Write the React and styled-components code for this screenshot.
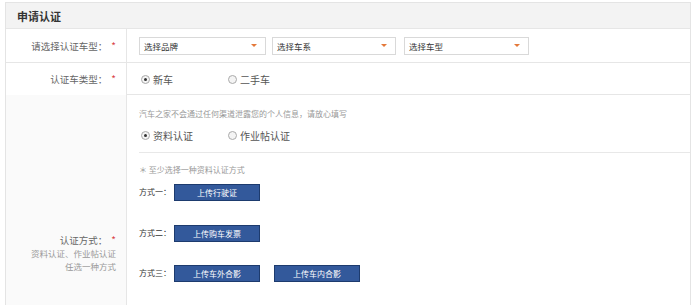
import React from "react"
import styled, { createGlobalStyle } from "styled-components"

const Global = createGlobalStyle`
  body {
    margin: 0;
    background: #fff;
    font-family: "Noto Sans CJK SC", "Liberation Sans", sans-serif;
  }
`

const Page = styled.div`
  padding: 2px 9px 0 5px;
  width: 700px;
  height: 305px;
  box-sizing: border-box;
  overflow: hidden;
`

const Box = styled.div`
  border: 1px solid #e4e4e4;
  border-bottom: none;
  width: 686px;
  box-sizing: border-box;
`

const Title = styled.div`
  height: 26px;
  background: #f3f3f3;
  border-bottom: 1px solid #e6e6e6;
  padding-left: 11px;
  display: flex;
  align-items: center;
  font-size: 11px;
  font-weight: bold;
  color: #333;
  box-sizing: border-box;
`

const Row = styled.div`
  display: grid;
  grid-template-columns: 121px 1fr;
  height: ${(p) => p.h}px;
  border-bottom: ${(p) => (p.last ? "none" : "1px solid #e6e6e6")};
  box-sizing: border-box;
`

const Label = styled.div`
  border-right: 1px solid #e6e6e6;
  background: ${(p) => (p.shade ? "#fafafa" : "#fff")};
  display: flex;
  flex-direction: column;
  align-items: flex-end;
  justify-content: center;
  padding-right: 10px;
  padding-top: ${(p) => p.pt || 0}px;
  font-size: 9.5px;
  color: #666;
  line-height: 13px;
  white-space: nowrap;
`

const Star = styled.span`
  color: #d9434a;
  margin-left: 4px;
  font-size: 10px;
`

const Hint = styled.span`
  font-size: 8.5px;
  color: #999;
  line-height: 13px;
`

const Content = styled.div`
  display: flex;
  flex-direction: ${(p) => (p.col ? "column" : "row")};
  align-items: ${(p) => (p.col ? "stretch" : "center")};
  padding-left: 12px;
`

const Select = styled.div`
  width: ${(p) => p.w}px;
  height: 18px;
  margin-right: ${(p) => p.mr}px;
  border: 1px solid #d9d9d9;
  box-sizing: border-box;
  display: flex;
  align-items: center;
  justify-content: space-between;
  padding: 0 8px 0 4px;
  font-size: 8.5px;
  color: #333;
  background: #fff;
`

const Caret = styled.span`
  width: 0;
  height: 0;
  border-left: 3px solid transparent;
  border-right: 3px solid transparent;
  border-top: 3px solid #e4793a;
`

const RadioRow = styled.div`
  display: flex;
  align-items: center;
  height: ${(p) => p.h}px;
  margin-left: 2px;
`

const Radio = styled.label`
  display: flex;
  align-items: center;
  width: ${(p) => p.w}px;
  font-size: 10px;
  color: #555;
`

const Dot = styled.span`
  width: 7px;
  height: 7px;
  border-radius: 50%;
  border: 1px solid #aaa;
  margin-right: 3px;
  display: flex;
  align-items: center;
  justify-content: center;
  background: #f4f4f4;
  &::after {
    content: "";
    width: 3px;
    height: 3px;
    border-radius: 50%;
    background: ${(p) => (p.on ? "#333" : "transparent")};
  }
`

const Note = styled.div`
  font-size: 8px;
  color: #999;
  height: ${(p) => p.h}px;
  display: flex;
  align-items: flex-end;
  white-space: nowrap;
`

const Divider = styled.div`
  border-top: 1px solid #e8e8e8;
  margin-top: 1px;
  height: 0;
`

const Way = styled.div`
  display: flex;
  align-items: center;
  margin-top: ${(p) => p.mt}px;
  font-size: 8px;
  color: #333;
  white-space: nowrap;
`

const WayLabel = styled.span`
  width: 35px;
  margin-top: -3px;
`

const Btn = styled.button`
  width: 86px;
  height: 17px;
  margin-right: 14px;
  background: #33599b;
  border: 1px solid #1d3b6e;
  color: #fff;
  font-family: inherit;
  font-size: 8px;
  padding: 0;
  cursor: pointer;
`

export default function App() {
  return (
    <Page>
      <Global />
      <Box>
        <Title>申请认证</Title>
        <Row h={34}>
          <Label>
            <span>请选择认证车型：<Star>*</Star></span>
          </Label>
          <Content>
            <Select w={127} mr={6}>选择品牌<Caret /></Select>
            <Select w={124} mr={8}>选择车系<Caret /></Select>
            <Select w={125} mr={0}>选择车型<Caret /></Select>
          </Content>
        </Row>
        <Row h={32}>
          <Label>
            <span>认证车类型：<Star>*</Star></span>
          </Label>
          <Content>
            <RadioRow h={32}>
              <Radio w={87}><Dot on />新车</Radio>
              <Radio w={80}><Dot />二手车</Radio>
            </RadioRow>
          </Content>
        </Row>
        <Row h={212} last>
          <Label shade pt={104}>
            <span>认证方式：<Star>*</Star></span>
            <Hint>资料认证、作业帖认证</Hint>
            <Hint>任选一种方式</Hint>
          </Label>
          <Content col>
            <Note h={24}>汽车之家不会通过任何渠道泄露您的个人信息，请放心填写</Note>
            <RadioRow h={32}>
              <Radio w={87}><Dot on />资料认证</Radio>
              <Radio w={90}><Dot />作业帖认证</Radio>
            </RadioRow>
            <Divider />
            <Note h={22}>＊ 至少选择一种资料认证方式</Note>
            <Way mt={9}><WayLabel>方式一：</WayLabel><Btn>上传行驶证</Btn></Way>
            <Way mt={24}><WayLabel>方式二：</WayLabel><Btn>上传购车发票</Btn></Way>
            <Way mt={23}><WayLabel>方式三：</WayLabel><Btn>上传车外合影</Btn><Btn>上传车内合影</Btn></Way>
          </Content>
        </Row>
      </Box>
    </Page>
  )
}
